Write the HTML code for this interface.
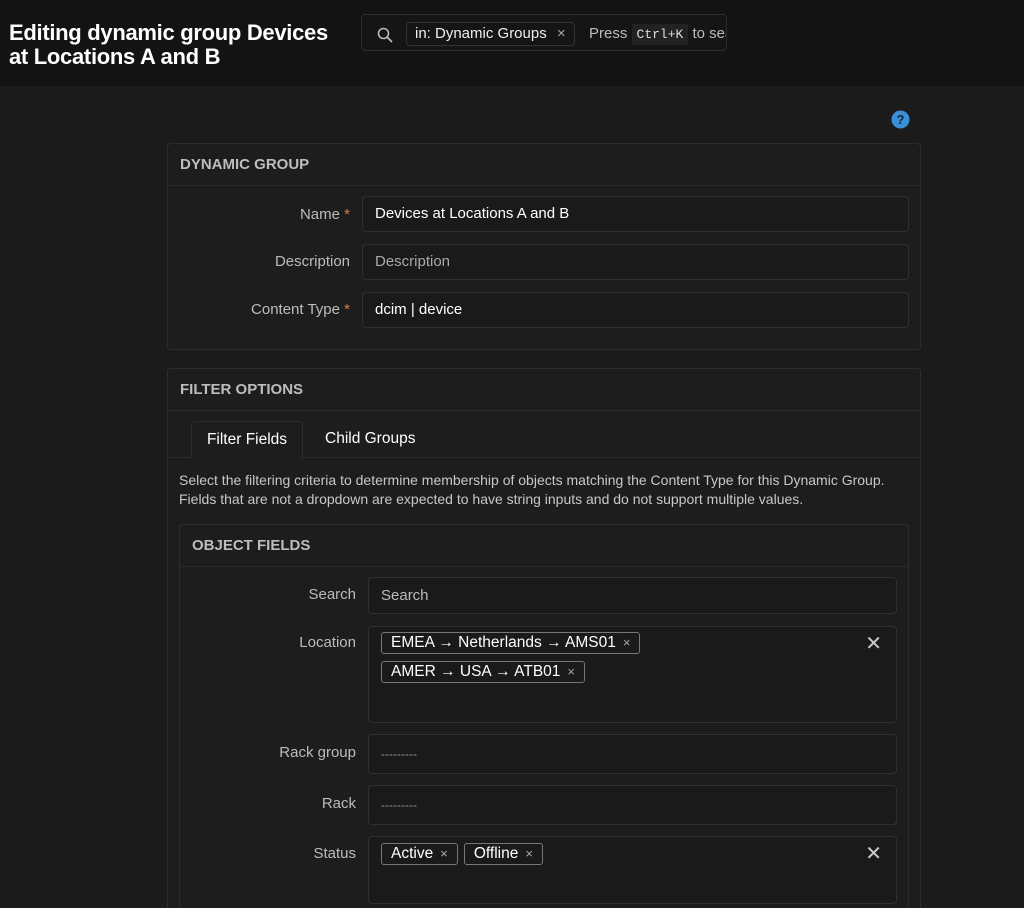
<!DOCTYPE html>
<html><head><meta charset="utf-8"><style>
*{box-sizing:border-box;margin:0;padding:0}
html,body{width:1024px;height:908px;overflow:hidden}
body{background:#1b1b1b;font-family:"Liberation Sans",sans-serif;color:#e6e6e6;position:relative}
.hdr{position:absolute;left:0;top:0;width:1024px;height:86px;background:#131313}
.title{position:absolute;left:9px;top:21px;font-size:22px;font-weight:bold;line-height:24px;color:#fff;letter-spacing:-0.3px}
.search{position:absolute;left:361px;top:14px;width:366px;height:37px;border:1px solid #2e2e2e;border-radius:4px;background:#151515;overflow:hidden;white-space:nowrap}
.chip{position:absolute;left:44px;top:7px;height:24px;padding:0 8px;border:1px solid #333;border-radius:4px;font-size:15px;line-height:22px;color:#eee}
.abs{position:absolute}
.panel{position:absolute;border:1px solid #2c2c2c;border-radius:4px;background:#1d1d1d}
.ph{height:42px;border-bottom:1px solid #2c2c2c;padding:0 12px;font-size:15px;font-weight:bold;line-height:42px;color:#bdbdbd}
.lbl{position:absolute;font-size:15px;color:#bcbcbc;text-align:right;width:160px}
.inp{position:absolute;border:1px solid #303030;border-radius:4px;background:#1a1a1a;font-size:15px;padding-left:12px;color:#fff}
.tag{display:inline-block;height:22px;border:1px solid #777;border-radius:3px;padding:0 9px;font-size:15.5px;line-height:20px;color:#fff;margin-right:6px}
.tag i{font-style:normal;color:#aaa;font-size:13px;margin-left:7px}
.x{position:absolute;right:14px;top:4px;font-size:20px;color:#ccc}
</style></head><body>
<div class="hdr">
<div class="title">Editing dynamic group Devices<br>at Locations A and B</div>
<div class="search">
<svg class="abs" style="left:15px;top:12px" width="16" height="16" viewBox="0 0 16 16"><circle cx="6.5" cy="6.5" r="5" fill="none" stroke="#bbb" stroke-width="1.6"/><line x1="10" y1="10" x2="15" y2="15" stroke="#bbb" stroke-width="1.8"/></svg>
<div class="chip">in: Dynamic Groups <span style="color:#aaa;margin-left:6px">×</span></div>
<div class="abs" style="left:227px;top:10px;font-size:15px;color:#bbb">Press <span style="background:#222;padding:3px 5px;font-family:'Liberation Mono',monospace;font-size:13px;color:#ddd">Ctrl+K</span> to search</div>
</div>
</div>
<svg class="abs" style="left:891px;top:110px" width="19" height="19" viewBox="0 0 19 19"><circle cx="9.5" cy="9.5" r="9" fill="#3a8fd6"/><text x="9.5" y="14" text-anchor="middle" font-family="Liberation Sans" font-weight="bold" font-size="13" fill="#10263a">?</text></svg>

<div class="panel" style="left:167px;top:143px;width:754px;height:207px">
<div class="ph">DYNAMIC GROUP</div>
<div class="lbl" style="left:22px;top:62px">Name <span style="color:#e0754a">*</span></div>
<div class="inp" style="left:194px;top:52px;width:547px;height:36px;line-height:34px">Devices at Locations A and B</div>
<div class="lbl" style="left:22px;top:109px">Description</div>
<div class="inp" style="left:194px;top:100px;width:547px;height:36px;line-height:34px;color:#aaa">Description</div>
<div class="lbl" style="left:22px;top:157px">Content Type <span style="color:#e0754a">*</span></div>
<div class="inp" style="left:194px;top:148px;width:547px;height:36px;line-height:34px">dcim | device</div>
</div>

<div class="panel" style="left:167px;top:368px;width:754px;height:560px">
<div class="ph">FILTER OPTIONS</div>
<div class="abs" style="left:0;top:88px;width:752px;border-top:1px solid #2c2c2c"></div>
<div class="abs" style="left:23px;top:52px;width:112px;height:37px;border:1px solid #2c2c2c;border-bottom:none;border-radius:4px 4px 0 0;background:#1d1d1d;font-size:15.5px;line-height:36px;text-align:center;color:#fff">Filter Fields</div>
<div class="abs" style="left:157px;top:61px;font-size:15.5px;color:#fff">Child Groups</div>
<div class="abs" style="left:11px;top:102px;font-size:14px;line-height:19px;color:#c8c8c8;width:742px;white-space:nowrap">Select the filtering criteria to determine membership of objects matching the Content Type for this Dynamic Group.<br>Fields that are not a dropdown are expected to have string inputs and do not support multiple values.</div>
<div class="panel" style="left:11px;top:155px;width:730px;height:420px">
<div class="ph">OBJECT FIELDS</div>
<div class="lbl" style="left:16px;top:61px">Search</div>
<div class="inp" style="left:188px;top:52px;width:529px;height:37px;line-height:35px;color:#bbb">Search</div>
<div class="lbl" style="left:16px;top:109px">Location</div>
<div class="inp" style="left:188px;top:101px;width:529px;height:97px;padding:5px 0 0 12px">
<span class="tag">EMEA → Netherlands → AMS01<i>×</i></span><br><span class="tag" style="margin-top:7px">AMER → USA → ATB01<i>×</i></span><span class="x">✕</span></div>
<div class="lbl" style="left:16px;top:219px">Rack group</div>
<div class="inp" style="left:188px;top:209px;width:529px;height:40px;line-height:38px;color:#999;font-size:12px">---------</div>
<div class="lbl" style="left:16px;top:270px">Rack</div>
<div class="inp" style="left:188px;top:260px;width:529px;height:40px;line-height:38px;color:#999;font-size:12px">---------</div>
<div class="lbl" style="left:16px;top:320px">Status</div>
<div class="inp" style="left:188px;top:311px;width:529px;height:68px;padding:6px 0 0 12px">
<span class="tag">Active<i>×</i></span><span class="tag">Offline<i>×</i></span><span class="x">✕</span></div>
</div>
</div>
</body></html>
